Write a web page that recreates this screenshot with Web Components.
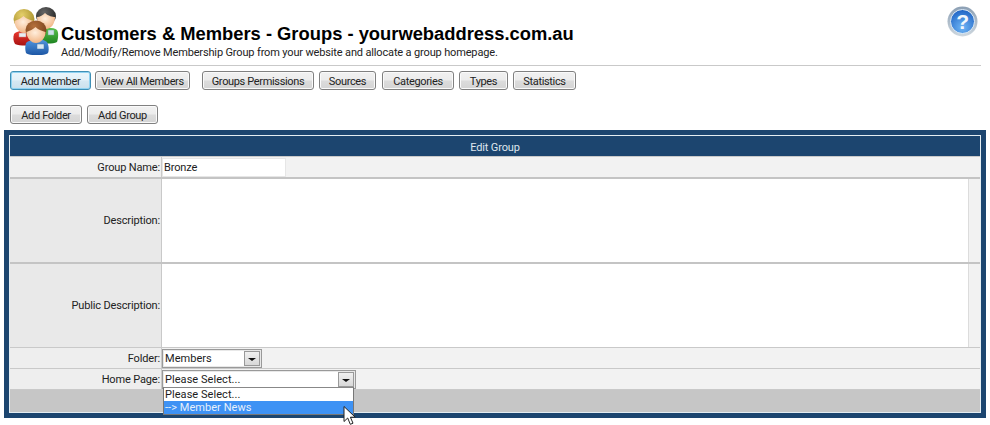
<!DOCTYPE html>
<html><head><meta charset="utf-8"><title>Edit Group</title>
<style>
html,body{margin:0;padding:0;background:#fff;overflow:hidden}
body{font:11px Roboto,"Liberation Sans",sans-serif;letter-spacing:-.15px;color:#222;height:425px}
</style></head><body>
<app-page>
  <page-header title-text="Customers &amp; Members - Groups - yourwebaddress.com.au" sub-text="Add/Modify/Remove Membership Group from your website and allocate a group homepage."></page-header>
  <button-row style="margin-top:5px">
    <app-button w="81" focus>Add Member</app-button>
    <app-button w="95" gap="4">View All Members</app-button>
    <app-button w="112" gap="12">Groups Permissions</app-button>
    <app-button w="57" gap="5">Sources</app-button>
    <app-button w="72" gap="6">Categories</app-button>
    <app-button w="49" gap="5">Types</app-button>
    <app-button w="63" gap="5">Statistics</app-button>
  </button-row>
  <button-row style="margin-top:15px">
    <app-button w="72">Add Folder</app-button>
    <app-button w="71" gap="5">Add Group</app-button>
  </button-row>
  <edit-panel heading="Edit Group">
    <form-row label="Group Name:" h="21" tone="a"><text-box>Bronze</text-box></form-row>
    <form-row label="Description:" h="85" tone="b" area><text-area-box></text-area-box></form-row>
    <form-row label="Public Description:" h="85" tone="b" area><text-area-box></text-area-box></form-row>
    <form-row label="Folder:" h="21" tone="c"><fake-select w="100">Members</fake-select></form-row>
    <form-row label="Home Page:" h="21" tone="c"><fake-select w="194" open>Please Select...</fake-select></form-row>
    <panel-foot></panel-foot>
  </edit-panel>
</app-page>
<script>
function def(name, css, html, init){
  customElements.define(name, class extends HTMLElement{
    constructor(){super();this.attachShadow({mode:'open'});}
    connectedCallback(){
      this.shadowRoot.innerHTML='<style>'+css+'</style>'+(typeof html==='function'?html(this):html);
      if(init)init(this);
    }
  });
}
def('app-page',':host{display:block;position:relative;width:990px;height:425px}','<slot></slot>');

def('page-header',`
:host{display:flex;height:65px;margin:0 9px 0 10px;border-bottom:1px solid #c9c9c9;position:relative}
.ic{width:46px;height:48px;margin:7px 2px 0 3px;flex:none;display:block}
.t{flex:1;padding-top:23px;min-width:0}
h1{margin:0;font:bold 18.35px/21px "Liberation Sans",Arial,sans-serif;letter-spacing:0;color:#000;white-space:nowrap}
p{margin:2px 0 0;font-size:11px;line-height:14px;color:#222;white-space:nowrap}
.h{width:31px;height:31px;margin:6px 3px 0 0;flex:none;display:block}
`,e=>`
<svg class="ic" viewBox="0 0 46 48">
 <defs>
  <radialGradient id="sk" cx=".45" cy=".35" r=".7"><stop offset="0" stop-color="#ffeedd"/><stop offset="1" stop-color="#f0b07c"/></radialGradient>
  <linearGradient id="re" x1="0" y1="0" x2="0" y2="1"><stop offset="0" stop-color="#ee3b30"/><stop offset="1" stop-color="#a81212"/></linearGradient>
  <linearGradient id="gr" x1="0" y1="0" x2="0" y2="1"><stop offset="0" stop-color="#5cc24a"/><stop offset="1" stop-color="#1e8422"/></linearGradient>
  <linearGradient id="bl" x1="0" y1="0" x2="0" y2="1"><stop offset="0" stop-color="#5296df"/><stop offset="1" stop-color="#1c56a4"/></linearGradient>
  <radialGradient id="bk" cx=".4" cy=".3" r=".8"><stop offset="0" stop-color="#666"/><stop offset="1" stop-color="#1c1c1c"/></radialGradient>
  <radialGradient id="ye" cx=".4" cy=".3" r=".8"><stop offset="0" stop-color="#e5cf6a"/><stop offset="1" stop-color="#9c8420"/></radialGradient>
  <radialGradient id="br" cx=".4" cy=".3" r=".8"><stop offset="0" stop-color="#b5703c"/><stop offset="1" stop-color="#6d3a17"/></radialGradient>
 </defs>
 <path d="M26 23c4-3 15-3 18 0 2 3 1 9 0 12-4 2-14 2-18 0z" fill="url(#gr)"/>
 <rect x="35" y="23" width="6" height="5" fill="#cfe0e8" stroke="#6a8" stroke-width=".5"/>
 <ellipse cx="33" cy="9" rx="10" ry="9" fill="url(#bk)"/>
 <path d="M24 10c3 0 6-2 8-4 3 3 8 4 10 4 0 7-4 12-9 12s-9-5-9-12z" fill="url(#sk)"/>
 <path d="M1 27c3-4 16-5 20-1 2 3 2 9 1 11-5 2-15 2-20 0-2-3-2-7-1-10z" fill="url(#re)"/>
 <rect x="6" y="26" width="7" height="4" fill="#e8eef2" stroke="#c88" stroke-width=".5"/>
 <ellipse cx="11" cy="12" rx="10.500" ry="10" fill="url(#ye)"/>
 <path d="M1.500 14c3-1 7-3 9-5 3 3 7 4 10 5 0 6-4.500 12-9.500 12s-9.500-6-9.500-12z" fill="url(#sk)"/>
 <path d="M13 36c3-4 17-5 21-1 2 3 2 9 1 11-3 3-19 3-22 0-1-3-1-7 0-10z" fill="url(#bl)"/>
 <rect x="24" y="37" width="7" height="5" fill="#d9e7f2" stroke="#47a" stroke-width=".5"/>
 <ellipse cx="23" cy="23" rx="10.500" ry="9.500" fill="url(#br)"/>
 <path d="M13.500 25c3-1 7-3 9-5 3 3 7 4 10 5 0 6-4.500 11-9.500 11s-9.500-5-9.500-11z" fill="url(#sk)"/>
</svg>
<div class="t"><h1>${e.getAttribute('title-text').replace('&','&amp;')}</h1><p>${e.getAttribute('sub-text')}</p></div>
<svg class="h" viewBox="0 0 31 31">
 <defs>
  <radialGradient id="q" cx=".5" cy=".75" r=".75"><stop offset="0" stop-color="#6fb6f6"/><stop offset="1" stop-color="#1f63c4"/></radialGradient>
  <linearGradient id="qr" x1="0" y1="0" x2="0" y2="1"><stop offset="0" stop-color="#8b9fb4"/><stop offset="1" stop-color="#cfd8df"/></linearGradient>
 </defs>
 <circle cx="15.500" cy="15.500" r="15" fill="url(#qr)"/>
 <circle cx="15.500" cy="15.500" r="12" fill="url(#q)" stroke="#e4eef6" stroke-width="1"/>
 <text x="15.500" y="23" text-anchor="middle" font-family="Liberation Sans" font-weight="bold" font-size="21" fill="#f2f7fc">?</text>
</svg>`);

def('button-row',':host{display:flex;margin-left:10px;height:19px}','<slot></slot>');

def('app-button',`
:host{display:block;box-sizing:border-box;height:19px;border:1px solid #808080;border-radius:3px;
background:linear-gradient(#f1f1f1 0,#ececec 48%,#dcdcdc 52%,#d4d4d4 100%);text-align:center;
font-size:11px;line-height:20px;letter-spacing:-.35px;color:#222;white-space:nowrap;box-shadow:inset 0 0 0 1px #fafafa;overflow:hidden}
:host([focus]){border-color:#3f8fb5;background:linear-gradient(#eaf5fb 0,#e2f0f8 48%,#d6e8f3 52%,#cbe0ec 100%);box-shadow:inset 0 0 0 1px #8fd2f2}
`,'<slot></slot>',e=>{e.style.width=e.getAttribute('w')+'px';if(e.hasAttribute('gap'))e.style.marginLeft=e.getAttribute('gap')+'px';});

def('edit-panel',`
:host{display:block;box-sizing:border-box;width:982px;height:288px;margin:6px 0 0 4px;padding:5px;background:#1c456f}
.in{border:1px solid #e4edf2;height:100%;box-sizing:border-box;display:flex;flex-direction:column;background:#f2f2f2}
.h{height:20px;flex:none;background:#1c456f;color:#dfe6ee;text-align:center;font-size:11px;line-height:23px;overflow:hidden}
`,e=>`<div class="in"><div class="h">${e.getAttribute('heading')}</div><slot></slot></div>`);

def('form-row',`
:host{display:grid;grid-template-columns:152px 1fr;box-sizing:border-box;border-top:1px solid #c9c9c9;flex:none}
.l{background:var(--lb);border-right:1px solid #c9c9c9;padding:0 1px 0 0;display:flex;align-items:center;justify-content:flex-end;font-size:11px;color:#222;white-space:nowrap}
.r{background:#f2f2f2;display:flex;align-items:center;min-width:0;position:relative}
`,e=>`<div class="l">${e.getAttribute('label')}</div><div class="r"><slot></slot></div>`,e=>{
  e.style.height=e.getAttribute('h')+'px';
  e.style.setProperty('--lb',{a:'#f0f0f0',b:'#e9e9e9',c:'#eeeeee'}[e.getAttribute('tone')]);
  if(e.hasAttribute('area'))e.style.borderTop='2px solid #c4c4c4';
});

def('text-box',`
:host{display:block;box-sizing:border-box;width:124px;height:19px;background:#fff;border:1px solid #e6e6e6;padding-left:1px;font-size:11px;line-height:17px;color:#1c1c1c}
`,'<slot></slot>');

def('text-area-box',`
:host{display:flex;align-self:stretch;flex:1;background:#fff}
.s{flex:1}.b{width:11px;background:#f2f2f2;border-left:1px solid #dcdcdc}
`,'<div class="s"></div><div class="b"></div>');

def('fake-select',`
:host{display:flex;position:relative;box-sizing:border-box;height:19px;background:#fff;border:1px solid #999;box-shadow:inset 0 0 0 1px #e8e8e8;font-size:11px;line-height:18px;letter-spacing:.05px;color:#1c1c1c}
.v{flex:1;padding-left:2px;white-space:nowrap}
.btn{width:16px;height:15px;margin:1px 1px 0 0;box-sizing:border-box;border:1px solid #999;background:linear-gradient(#f0f0f0,#d8d8d8);display:flex;align-items:center;justify-content:center}
.btn i{display:block;width:0;height:0;border:4px solid transparent;border-top:3px solid #111;border-bottom:0;margin-top:3px}
.menu{position:absolute;z-index:3;left:0;right:1px;top:16px;box-sizing:border-box;background:#fff;border:1px solid #777;border-top:1px solid #888;height:28px;line-height:13px;padding:0}
.o{height:13px;padding-left:1px;color:#1c1c1c;white-space:nowrap}
.o.sel{background:#3e92f4;color:#e6f0fb}
`,e=>`<div class="v"><slot></slot></div><div class="btn"><i></i></div>${e.hasAttribute('open')?'<div class="menu"><div class="o">Please Select...</div><div class="o sel">--&gt; Member News</div></div><svg style="position:absolute;z-index:4;left:180px;top:35px;overflow:visible" width="15" height="20" viewBox="0 0 15 20"><path d="M1 0.500V15.500L4.700 12 7.300 18.300 10 17.200 7.400 11.200H12.200Z" fill="#fff" stroke="#222" stroke-width="1"/></svg>':''}`,e=>{e.style.width=e.getAttribute('w')+'px';});

def('panel-foot',':host{display:block;flex:1;background:#c6c6c6;border-top:1px solid #c9c9c9}','');
</script>
</body></html>
